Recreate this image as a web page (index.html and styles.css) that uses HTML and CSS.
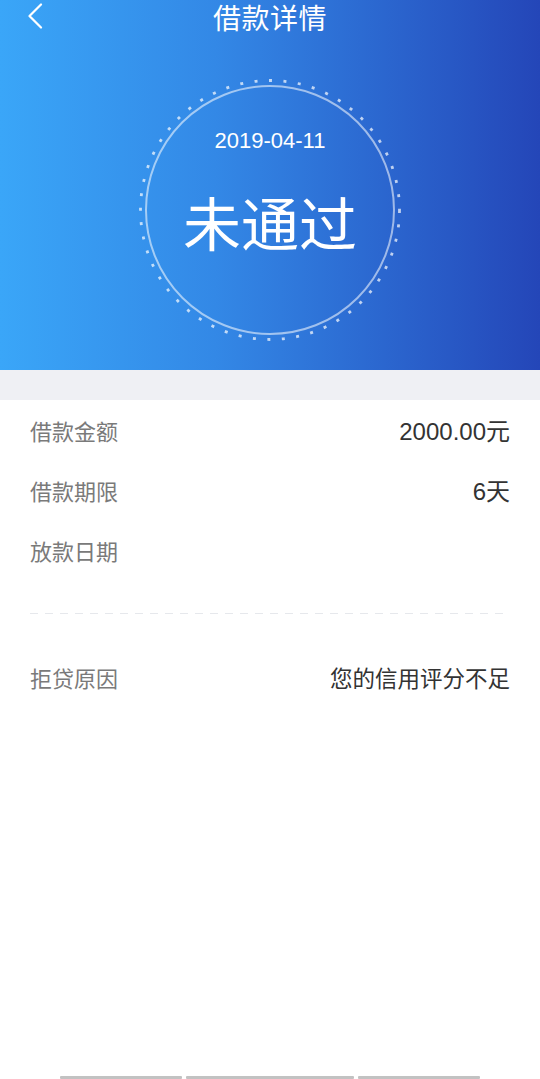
FILE: index.html
```html
<!DOCTYPE html>
<html lang="zh-CN">
<head>
<meta charset="utf-8">
<title>借款详情</title>
<link rel="stylesheet" href="styles.css">
</head>
<body>
<div class="page">
  <header class="hero">
    <div class="nav">
      <span class="back">
        <svg width="16" height="26" viewBox="0 0 16 26"><path d="M14 1.5 L2.5 13 L14 24.5" fill="none" stroke="#fff" stroke-width="2.2" stroke-linecap="round" stroke-linejoin="round"/></svg>
      </span>
      <h1 class="title">借款详情</h1>
    </div>
    <div class="ring">
      <svg class="dots" width="262" height="262" viewBox="0 0 262 262"><circle cx="131" cy="131" r="129.5" fill="none" stroke="rgba(255,255,255,0.7)" stroke-width="2.8" stroke-dasharray="3 11.5"/></svg>
      <div class="circle">
        <div class="date">2019-04-11</div>
        <div class="status">未通过</div>
      </div>
    </div>
  </header>
  <div class="gap"></div>
  <section class="details">
    <div class="row"><span class="label">借款金额</span><span class="value num">2000.00元</span></div>
    <div class="row"><span class="label">借款期限</span><span class="value num">6天</span></div>
    <div class="row"><span class="label">放款日期</span><span class="value"></span></div>
    <div class="divider"></div>
    <div class="row reason"><span class="label">拒贷原因</span><span class="value cjk">您的信用评分不足</span></div>
  </section>
  <div class="home-bar">
    <span class="seg s1"></span><span class="seg s2"></span><span class="seg s3"></span>
  </div>
</div>
</body>
</html>
```
FILE: styles.css
```css
* { box-sizing: border-box; margin: 0; padding: 0; }
html, body { width: 540px; height: 1079px; overflow: hidden; background: #fff; }
body { font-family: "Liberation Sans", "Noto Sans CJK SC", sans-serif; }
.page { position: relative; width: 540px; height: 1079px; display: flex; flex-direction: column; }
.hero {
  height: 370px;
  background: linear-gradient(90deg, #3aa6f8 0%, #3388e6 40%, #2a62cc 75%, #2446b8 100%);
  display: flex; flex-direction: column; align-items: center;
}
.nav { position: relative; width: 100%; height: 36px; display: flex; justify-content: center; align-items: flex-start; }
.back { position: absolute; left: 27px; top: 3px; width: 16px; height: 26px; display: block; }
.back svg { display: block; }
.title { font-weight: normal; color: #fff; font-size: 28px; line-height: 34px; letter-spacing: 0.5px; font-family: "Noto Sans CJK SC", sans-serif; }
.ring { position: relative; width: 262px; height: 262px; margin-top: 43px; display: flex; align-items: center; justify-content: center; }
.dots { position: absolute; left: 0; top: 0; }
.circle {
  width: 250px; height: 250px; border-radius: 50%;
  border: 2px solid rgba(255,255,255,0.55);
  display: flex; flex-direction: column; align-items: center;
  padding-top: 42px; color: #fff;
}
.date { font-size: 22px; line-height: 24px; }
.status { font-size: 58px; line-height: 66px; margin-top: 35px; font-family: "Noto Sans CJK SC", sans-serif; }
.gap { height: 30px; background: #eff0f4; }
.details { padding: 1px 30px 0; }
.row { height: 60px; display: flex; justify-content: space-between; align-items: center; padding-bottom: 3px; }
.label { font-size: 22px; color: #7a7a7a; font-family: "Noto Sans CJK SC", sans-serif; }
.value { font-size: 22px; color: #333; }
.num { font-size: 24px; }
.cjk { font-size: 22.5px; }
.divider {
  height: 1px; margin-top: 32px; margin-right: 6px;
  background: repeating-linear-gradient(90deg, #e6e8ec 0 8px, transparent 8px 15px);
}
.reason { margin-top: 34px; }
.home-bar { position: absolute; left: 0; bottom: 0; width: 540px; height: 4px; display: flex; }
.seg { height: 3px; margin-top: 1px; background: #c2c2c2; border-radius: 1px; display: block; }
.s1 { margin-left: 60px; width: 122px; }
.s2 { margin-left: 4px; width: 168px; }
.s3 { margin-left: 4px; width: 122px; }
```
